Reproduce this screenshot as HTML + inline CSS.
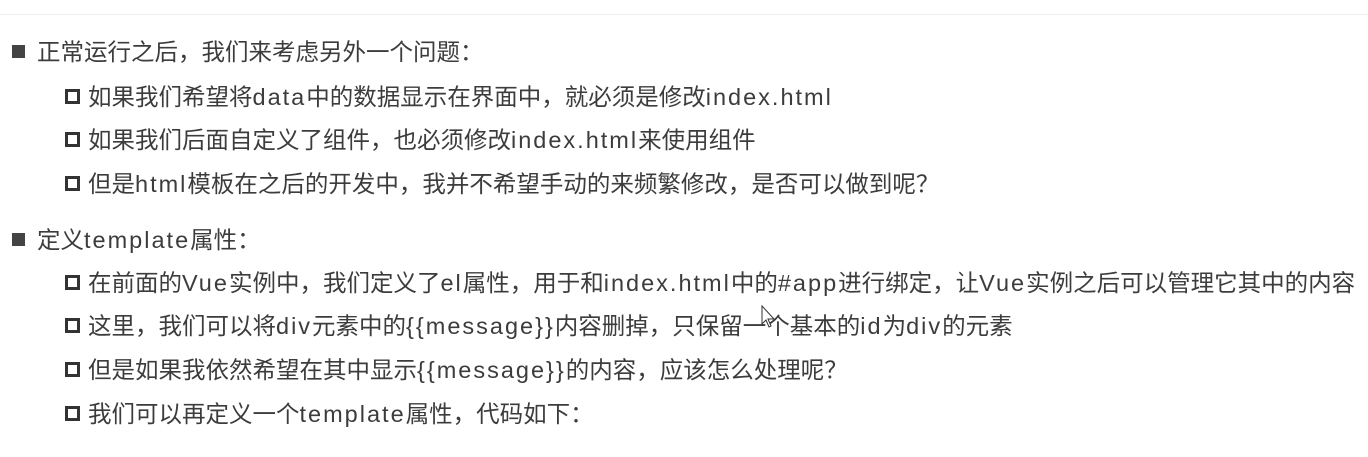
<!DOCTYPE html>
<html><head><meta charset="utf-8">
<style>
html,body{margin:0;padding:0;background:#fff;}
body{width:1368px;height:457px;position:relative;overflow:hidden;font-family:"Liberation Sans","Noto Sans CJK SC",sans-serif;color:#3c3c3c;font-size:23.5px;}
.top{position:absolute;left:0;top:14px;width:1368px;height:1px;background:#eee;}
.l{position:absolute;white-space:nowrap;line-height:26px;}
.l1{left:37px;}
.l2{left:88px;}
.b1{position:absolute;left:12px;width:13px;height:13px;background:#444;}
.b2{position:absolute;left:65px;width:9px;height:9px;border:3px solid #333;}
.e{letter-spacing:2px;}
</style></head><body>
<div class="top"></div>
<div class="b1" style="top:45px"></div><div class="l l1" style="top:39px">正常运行之后，我们来考虑另外一个问题：</div>
<div class="b2" style="top:89px"></div><div class="l l2" style="top:84px">如果我们希望将<span class="e">data</span>中的数据显示在界面中，就必须是修改<span class="e">index.html</span></div>
<div class="b2" style="top:132px"></div><div class="l l2" style="top:127px">如果我们后面自定义了组件，也必须修改<span class="e">index.html</span>来使用组件</div>
<div class="b2" style="top:176px"></div><div class="l l2" style="top:171px">但是<span class="e">html</span>模板在之后的开发中，我并不希望手动的来频繁修改，是否可以做到呢？</div>
<div class="b1" style="top:233px"></div><div class="l l1" style="top:227px">定义<span class="e">template</span>属性：</div>
<div class="b2" style="top:275px"></div><div class="l l2" style="top:270px">在前面的<span class="e">Vue</span>实例中，我们定义了<span class="e">el</span>属性，用于和<span class="e">index.html</span>中的<span class="e">#app</span>进行绑定，让<span class="e">Vue</span>实例之后可以管理它其中的内容</div>
<div class="b2" style="top:318px"></div><div class="l l2" style="top:313px">这里，我们可以将<span class="e">div</span>元素中的<span class="e">{{message}}</span>内容删掉，只保留一个基本的<span class="e">id</span>为<span class="e">div</span>的元素</div>
<div class="b2" style="top:362px"></div><div class="l l2" style="top:357px">但是如果我依然希望在其中显示<span class="e">{{message}}</span>的内容，应该怎么处理呢？</div>
<div class="b2" style="top:406px"></div><div class="l l2" style="top:401px">我们可以再定义一个<span class="e">template</span>属性，代码如下：</div>
<svg style="position:absolute;left:761px;top:305px" width="16" height="24"><path d="M1 1 L1 19 L5 15 L8 22 L10 21 L7 14 L13 14 Z" fill="#fff" stroke="#333" stroke-width="1"/></svg>
</body></html>
